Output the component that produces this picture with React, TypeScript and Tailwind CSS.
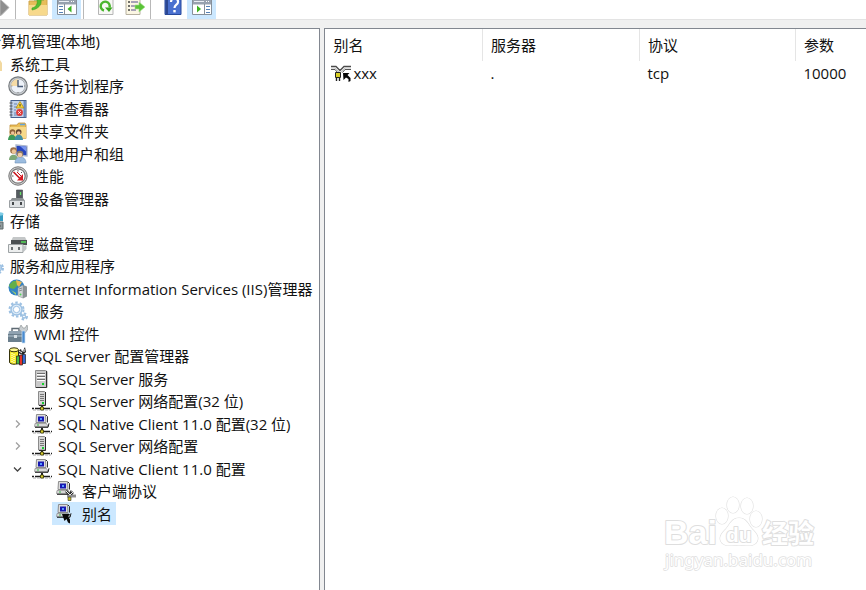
import type { ReactNode } from "react";

const svg = (children: ReactNode, width = 20) => (
  <svg width={width} height={20} viewBox={`0 0 ${width} 20`} className="shrink-0" aria-hidden="true">
    {children}
  </svg>
);

const ComputerIcon = () => svg(<rect x="1" y="3" width="17" height="13" fill="#9ab" />);

const ToolsIcon = () => svg(<path d="M2 6h14l2 3v8H2z" fill="#f2d9a0" />);

const ClockIcon = () =>
  svg(
    <>
      <circle cx="10" cy="10" r="9.2" fill="#cfd3d6" stroke="#777b7f" strokeWidth="1.2" />
      <circle cx="10" cy="10" r="7.2" fill="#eef2f8" stroke="#9aa0a6" strokeWidth=".8" />
      <path d="M10 10V3a7 7 0 0 0-7 7z" fill="#f6dba5" />
      <path d="M10 4v6.500H15" fill="none" stroke="#4a5c78" strokeWidth="1.4" />
      <path d="M10 16v1M3.300 10h1M16 10h1" stroke="#777" />
    </>
  );

const EventIcon = () =>
  svg(
    <>
      <rect x="3" y="1.500" width="15" height="17" fill="#c3d2ea" stroke="#47618f" />
      <path d="M15.500 2H17.500v16H15.500z" fill="#6d8cc0" />
      <path d="M6 5h3M6 8h3M6 11h2M6 14h2M6 16h8" stroke="#6684b4" />
      <path d="M12 2.500l4 6.500H8z" fill="#f8d437" stroke="#ad8510" strokeWidth=".7" />
      <path d="M12 5v2.500" stroke="#333" />
      <circle cx="11.500" cy="13.500" r="3.400" fill="#df3b3b" />
      <path d="M10.300 12.300l2.400 2.400m0-2.400l-2.400 2.400" stroke="#fff" />
      <path d="M1.500 4h3M1.500 7h3M1.500 10h3M1.500 13h3M1.500 16h3" stroke="#555" />
    </>
  );

const SharedIcon = () =>
  svg(
    <>
      <path d="M2 4h7l1.500-2H17l1 2v13.500H2z" fill="#e9bd57" stroke="#c0913a" strokeWidth=".8" />
      <path d="M2 6h16v11.500H2z" fill="#f6d98b" />
      <path d="M12 3.500h5" stroke="#64a5dd" strokeWidth="1.500" />
      <path d="M0 19c0-7 8-7 8 0z" fill="#3e9a56" />
      <path d="M6.500 19c0-7 8.500-7 8.500 0z" fill="#3e8fa4" />
      <circle cx="4.500" cy="11" r="2.800" fill="#8d5f38" />
      <circle cx="10.700" cy="11" r="2.800" fill="#5d4130" />
      <circle cx="4.700" cy="12" r="1.800" fill="#eec39b" />
      <circle cx="10.700" cy="12" r="1.800" fill="#eec39b" />
    </>
  );

const UsersIcon = () =>
  svg(
    <>
      <path d="M8 1l11 1v10l-11-1z" fill="#2745bd" stroke="#a9b4cc" strokeWidth="1.300" />
      <path d="M12 2l6 .5v5z" fill="#7995ee" />
      <path d="M1 16c0-7 9-7 9 0z" fill="#7ea877" />
      <path d="M7 19c0-8 11-8 11 0z" fill="#9bbcdf" stroke="#6d8fb7" strokeWidth=".6" />
      <circle cx="5.500" cy="6.500" r="3.300" fill="#9d7148" />
      <circle cx="5.900" cy="7.500" r="2.200" fill="#edc496" />
      <circle cx="12" cy="10" r="3.300" fill="#8a7a68" />
      <circle cx="12" cy="11" r="2.300" fill="#f0cba5" />
    </>
  );

const PerfIcon = () =>
  svg(
    <>
      <circle cx="10" cy="10" r="9.200" fill="#d4d4d4" stroke="#747474" />
      <circle cx="10" cy="10" r="7.200" fill="#fff" stroke="#777" strokeWidth="1.200" />
      <path d="M5.500 6l6.500 6.500" stroke="#c8131b" strokeWidth="1.600" />
      <path d="M9 14.500h6V8z" fill="#d91c23" />
      <path d="M9 6l5 5" stroke="#c8131b" />
      <path d="M4 10h1.500M10 4v1.500M14 6l-1 1" stroke="#555" />
    </>
  );

const DeviceIcon = () =>
  svg(
    <>
      <path d="M8.500 1h6v10h-6z" fill="#555b60" stroke="#3c4144" strokeWidth=".6" />
      <path d="M12.500 3v3" stroke="#67df69" strokeWidth="1.300" />
      <path d="M4 9h11l2 3H2z" fill="#8b9092" />
      <path d="M1.500 11.500h15v7h-15z" fill="#dee1e3" stroke="#9a9fa2" />
      <path d="M5 13v3M13 13v3" stroke="#34383a" strokeWidth="1.800" />
    </>
  );

const StorageIcon = () =>
  svg(
    <>
      <path d="M8 3h11v7H8z" fill="#329ac0" />
      <ellipse cx="14" cy="3" rx="5.500" ry="1.800" fill="#7fcce5" />
      <path d="M8 11h11v7H8z" fill="#909b9d" stroke="#5d686a" />
      <path d="M16 14v2" stroke="#555" />
    </>
  );

const DiskIcon = () =>
  svg(
    <>
      <path d="M5 3h12l2 4H3z" fill="#c4c7c8" />
      <path d="M3 6h16v5H3z" fill="#4b5052" />
      <path d="M13 8h5" stroke="#53db58" strokeWidth="1.500" />
      <path d="M15.500 12l3-1v4l-3 3z" fill="#c0c4c6" />
      <path d="M.5 10.500h14.500v8H.5z" fill="#eceeee" stroke="#9da2a4" />
      <path d="M4 13v3M11 13v3" stroke="#565c5e" strokeWidth="1.700" />
    </>
  );

const GearShape = ({ cx, cy, r }: { cx: number; cy: number; r: number }) => (
  <g fill="none" stroke="#9cc0e2">
    <circle cx={cx} cy={cy} r={r} strokeWidth="2" strokeDasharray="2.500 2" />
    <circle cx={cx} cy={cy} r={r - 1.5} fill="#dcebf8" strokeWidth="1.400" />
    <circle cx={cx} cy={cy} r={r / 2.2} fill="#fff" />
  </g>
);

const AppsIcon = () => svg(<GearShape cx={14} cy={12} r={5} />);

const ServicesIcon = () =>
  svg(
    <>
      <GearShape cx={8.5} cy={8.5} r={7} />
      <GearShape cx={16} cy={15.5} r={3} />
    </>
  );

const IisIcon = () =>
  svg(
    <>
      <circle cx="8.500" cy="8.500" r="8" fill="#3183c6" />
      <path d="M1 6l4-4 5 0-1 5-3 3-4-1z" fill="#63af49" />
      <path d="M8 1l6 2-3 5-2-2z" fill="#eab952" />
      <path d="M3 11l5 3 0 2z" fill="#a6d46a" />
      <path d="M10 9l5-3v13l-5-2z" fill="#d2d6d8" stroke="#8e9699" strokeWidth=".6" />
      <path d="M15 6l4 1.500v10L15 19.500z" fill="#8b9396" />
      <path d="M11 10l3-1M11 12l3-1" stroke="#858b8e" />
      <circle cx="12.500" cy="15.500" r="1" fill="#4cd653" />
    </>
  );

const WmiIcon = () =>
  svg(
    <>
      <path d="M4 7V4.500h7V7" fill="none" stroke="#5e6a73" strokeWidth="1.400" />
      <path d="M1 7h14l2 4H0z" fill="#8fa2b1" />
      <path d="M0 10h16v8H0z" fill="#6b7f8d" />
      <path d="M0 12h16" stroke="#b6c7d2" />
      <path d="M6 11h3v3H6z" fill="#d8e1e6" />
      <path d="M13 1l2 3 2 0 2-3 1 4-3 4-3-1-3-3z" fill="#c9ced1" stroke="#83898c" strokeWidth=".6" />
      <path d="M14 7h3v12h-3z" fill="#4a8bcf" stroke="#c9dff2" strokeWidth=".7" />
    </>
  );

const SqlIcon = () =>
  svg(
    <>
      <path d="M1.500 4v12c0 3 9 3 9 0V4z" fill="#f4eb2c" stroke="#35320a" />
      <ellipse cx="6" cy="3.800" rx="4.500" ry="2" fill="#fff98c" stroke="#35320a" />
      <path d="M4 7v9M6 8v9" stroke="#fff" strokeDasharray="1 1" />
      <path d="M10 5l3-2 1 3 3-5 1 5-3 3-5-2z" fill="#252525" />
      <path d="M8.500 10h3v8h-3z" fill="#42b944" stroke="#222" strokeWidth=".7" />
      <path d="M11.500 9h3v10h-3z" fill="#e33328" stroke="#222" strokeWidth=".7" />
      <path d="M14.500 8.500h3v9h-3z" fill="#3467d6" stroke="#222" strokeWidth=".7" />
      <path d="M11 5l3 2M16 3v3" stroke="#fff" />
    </>
  );

const ServerIcon = () =>
  svg(
    <>
      <path d="M3.500 1.500h10l1.500 1v16H3.500z" fill="#c9c9c9" stroke="#8e8e8e" />
      <path d="M14.500 2v16.500H4" fill="none" stroke="#333" />
      <path d="M5 4.500h8M5 7.500h8M5 10.500h8" stroke="#6f6f6f" />
      <path d="M5 5.500h8M5 8.500h8M5 11.500h8" stroke="#fff" />
      <path d="M10 14h2v2h-2z" fill="#13d32b" />
    </>
  );

const Cable = () => (
  <>
    <path d="M10 14v3" stroke="#222" strokeWidth="2" />
    <path d="M0 17.500h20" stroke="#1d1d1d" strokeWidth="1.400" strokeDasharray="2 1 5 0" />
    <path d="M1 19h18" stroke="#aaa" strokeDasharray="3 1" />
    <path d="M8.500 16h3v3h-3z" fill="#d6cc30" stroke="#3b3808" strokeWidth=".8" />
  </>
);

const NetworkIcon = () =>
  svg(
    <>
      <Cable />
      <path d="M6.500.5h6l1 1V14h-7z" fill="#d4d4d4" stroke="#8a8a8a" />
      <path d="M13.500 1v13.500H7" fill="none" stroke="#272727" />
      <path d="M8 3.500h4M8 5.500h4M8 7.500h4M8 9.500h4" stroke="#777" />
      <path d="M10 11h2v2h-2z" fill="#18c832" />
    </>
  );

const Monitor = () => (
  <>
    <path d="M4.500.5h9l.5 8H4z" fill="#dcdcdc" stroke="#8c8c8c" />
    <path d="M14 1l1.500 1.500v6" fill="none" stroke="#333" />
    <path d="M6 2.500h6v5H6z" fill="#1719b3" />
    <path d="M8 4h2v2H8z" fill="#5799ff" />
    <path d="M3 9.500h11.500l1.500 3H2.500z" fill="#d8d8d8" stroke="#888" strokeWidth=".7" />
    <path d="M3 13.300h13l1-4" fill="none" stroke="#1b1b1b" />
    <path d="M5 11h2" stroke="#35b944" />
  </>
);

const ClientIcon = () => svg(<><Cable /><Monitor /></>);

const ProtocolIcon = () =>
  svg(
    <>
      <g transform="translate(-2 0)"><Monitor /></g>
      <path d="M10 10l4 4 3-3M11 15h9" fill="none" stroke="#333" strokeWidth="2.500" />
      <path d="M10 10l4 4 3-3M11 15h9" fill="none" stroke="#eee" />
      <path d="M12 16h3v3.500h-3z" fill="#c9bd21" stroke="#333" strokeWidth=".6" />
    </>
  );

const AliasIcon = () =>
  svg(
    <>
      <g transform="translate(-2 0)"><Monitor /></g>
      <path d="M6 10h8l-2 2.500 2 3v4l-2-1-1.500-3.500-2 2z" fill="#080808" />
    </>
  );

const AliasItemIcon = () =>
  svg(
    <>
      <path d="M0 3.500h5l4 4 4-4h7" fill="none" stroke="#4b4b4b" strokeWidth="1.300" />
      <path d="M0 5h4l5 5 5-5h6" fill="none" stroke="#c4c4c4" strokeWidth="1.200" />
      <path d="M0 6.500h4l2.500 3M20 6.500h-6l-2.500 3" fill="none" stroke="#555" />
      <path d="M4.500 9.500h5v5h-5z" fill="#d8cf26" stroke="#222" />
      <path d="M5.500 15v3M8.500 15v3" stroke="#222" strokeWidth="1.400" />
      <path d="M12 10h6.500l-2 2 3 3v3l-2 1v-3l-2.500-1.500-2.500 2.500z" fill="#050505" />
    </>
  );

type Node = { level: number; label: string; icon: () => ReactNode; state?: "open" | "closed"; selected?: boolean };

const nodes: Node[] = [
  { level: 0, label: "计算机管理(本地)", icon: ComputerIcon },
  { level: 1, label: "系统工具", icon: ToolsIcon },
  { level: 2, label: "任务计划程序", icon: ClockIcon },
  { level: 2, label: "事件查看器", icon: EventIcon },
  { level: 2, label: "共享文件夹", icon: SharedIcon },
  { level: 2, label: "本地用户和组", icon: UsersIcon },
  { level: 2, label: "性能", icon: PerfIcon },
  { level: 2, label: "设备管理器", icon: DeviceIcon },
  { level: 1, label: "存储", icon: StorageIcon },
  { level: 2, label: "磁盘管理", icon: DiskIcon },
  { level: 1, label: "服务和应用程序", icon: AppsIcon },
  { level: 2, label: "Internet Information Services (IIS)管理器", icon: IisIcon },
  { level: 2, label: "服务", icon: ServicesIcon },
  { level: 2, label: "WMI 控件", icon: WmiIcon },
  { level: 2, label: "SQL Server 配置管理器", icon: SqlIcon },
  { level: 3, label: "SQL Server 服务", icon: ServerIcon },
  { level: 3, label: "SQL Server 网络配置(32 位)", icon: NetworkIcon },
  { level: 3, label: "SQL Native Client 11.0 配置(32 位)", icon: ClientIcon, state: "closed" },
  { level: 3, label: "SQL Server 网络配置", icon: NetworkIcon, state: "closed" },
  { level: 3, label: "SQL Native Client 11.0 配置", icon: ClientIcon, state: "open" },
  { level: 4, label: "客户端协议", icon: ProtocolIcon },
  { level: 4, label: "别名", icon: AliasIcon, selected: true },
];

const indent = ["pl-0", "pl-6", "pl-12", "pl-18", "pl-24"];

function TreeRow({ node }: { node: Node }) {
  const Icon = node.icon;
  return (
    <li
      role="treeitem"
      aria-level={node.level + 1}
      aria-selected={!!node.selected}
      className={`flex items-center gap-0.5 odd:h-[22px] even:h-[23px] ${indent[node.level]}`}
    >
      {node.state ? (
        <button aria-label={node.state === "open" ? "折叠" : "展开"} className="flex h-full w-4 shrink-0 items-center justify-center">
          <svg width="10" height="10" viewBox="0 0 10 10" fill="none" strokeWidth="1.300" aria-hidden="true">
            {node.state === "open" ? <path d="M1 3.500l3.500 3.500 3.500-3.500" stroke="#444" /> : <path d="M3 1.500l3.500 3.500-3.500 3.500" stroke="#a0a0a0" />}
          </svg>
        </button>
      ) : (
        <span className="w-4 shrink-0" />
      )}
      <button className={`flex h-full items-center gap-1.5 px-1 whitespace-nowrap ${node.selected ? "bg-[#cce8ff]" : ""}`}>
        <Icon />
        {node.label}
      </button>
    </li>
  );
}

const Separator = ({ className }: { className: string }) => <span className={`h-full w-px shrink-0 bg-[#b8b8b8] ${className}`} />;

function ToolButton({ label, active, children }: { label: string; active?: boolean; children: ReactNode }) {
  return (
    <button aria-label={label} className={`flex h-full w-[29px] shrink-0 items-end justify-center pb-0.5 ${active ? "bg-[#cce8ff]" : ""}`}>
      {children}
    </button>
  );
}

const PanelIcon = ({ right }: { right?: boolean }) =>
  svg(
    <>
      <path d="M.5 2.500h19v15H.5z" fill="#fff" stroke="#87909a" />
      <path d="M1 3h18v4.500H1z" fill="#97a1af" />
      <path d="M2 4.500h10" stroke="#e9edf3" />
      <path d="M14 4.500h4" stroke="#fff" strokeDasharray="1 1" />
      <path d={right ? "M12.500 7v10" : "M7.500 7v10"} stroke="#87909a" />
      <path d={right ? "M14 9.500h4M14 12.500h4M14 15.500h4" : "M2 9.500h4M2 12.500h4M2 15.500h4"} stroke="#5581b7" />
      <path d={right ? "M5 8.500v7l4-3.500z" : "M14.500 8.500v7l-4-3.500z"} fill="#3bb31f" />
    </>
  );

function Toolbar() {
  return (
    <div role="toolbar" aria-label="工具栏" className="flex h-5 shrink-0 overflow-hidden border-b border-[#e3e3e3] bg-white">
      <button aria-label="前进" className="flex w-[15px] shrink-0 items-end">
        <svg width="10" height="20" viewBox="0 0 10 20" aria-hidden="true">
          <path d="M0 1h1l8 7.500-8 8H0z" fill="#8e8e8e" stroke="#b4b4b4" />
        </svg>
      </button>
      <Separator className="mr-[7px]" />
      <ToolButton label="向上">
        {svg(
          <>
            <path d="M1 4h8l2-2h8v16H1z" fill="#e7bd59" stroke="#d0a54b" />
            <path d="M1 8h18v10H1z" fill="#f7d98c" />
            <path d="M4 11c4-1 6-4 5-8H6l5-5 5 5h-3c1 5-3 9-9 10z" fill="#54bd31" stroke="#3b9d22" strokeWidth=".6" />
          </>
        )}
      </ToolButton>
      <ToolButton label="显示控制台树" active><PanelIcon /></ToolButton>
      <Separator className="ml-0.5 mr-[7px]" />
      <ToolButton label="刷新">
        {svg(
          <>
            <path d="M2.500 0H14l3 3v14.500H2.500z" fill="#f8f8f5" stroke="#b5b5b5" />
            <path d="M8 13.500a4.500 4.500 0 1 1 5.500-3" fill="none" stroke="#4bb62f" strokeWidth="2.400" />
            <path d="M9 10.500h7.500L13 15z" fill="#37a61d" />
          </>
        )}
      </ToolButton>
      <ToolButton label="导出列表">
        {svg(
          <>
            <path d="M1 0h12l2 3v14.500H1z" fill="#fbf6e3" stroke="#b6b0a0" />
            <path d="M3 5h2M3 9h2M3 13h2" stroke="#444" strokeWidth="1.300" />
            <path d="M6 5h7M6 9h6M6 13h5" stroke="#8c86a8" strokeWidth="1.300" />
            <path d="M10 8h4V5l6 5-6 5v-3h-4z" fill="#5ac337" stroke="#a3e18a" strokeWidth=".6" />
          </>
        )}
      </ToolButton>
      <Separator className="ml-px mr-[7px]" />
      <ToolButton label="帮助">
        {svg(
          <>
            <path d="M2 0h16v17.500H2z" fill="#4a70cf" stroke="#27499c" />
            <path d="M2.500 0H5v17.500H2.500z" fill="#2b4791" />
            <path d="M8 5c0-5 7.500-4.500 7 0 0 3-3.500 2.500-3.500 6" fill="none" stroke="#fff" strokeWidth="2.200" />
            <path d="M10.300 13h2.400v2.400h-2.400z" fill="#fff" />
          </>
        )}
      </ToolButton>
      <ToolButton label="显示操作窗格" active><PanelIcon right /></ToolButton>
    </div>
  );
}

const columns = ["别名", "服务器", "协议", "参数"];

function Watermark() {
  return (
    <svg
      className="pointer-events-none absolute right-11 bottom-3"
      width="160"
      height="84"
      viewBox="0 0 160 84"
      fill="#fff"
      stroke="#dedede"
      strokeWidth="2"
      strokeLinejoin="round"
      paintOrder="stroke"
      role="img"
      aria-label="Baidu 经验"
    >
      <g fontFamily="'Liberation Sans', 'Noto Sans CJK SC', sans-serif" fontWeight="700">
        <text x="2" y="50" fontSize="34">Bai</text>
        <g strokeWidth="1.200">
          <ellipse cx="60" cy="22" rx="6" ry="8" />
          <ellipse cx="71" cy="11" rx="6" ry="8" />
          <ellipse cx="85" cy="12" rx="6" ry="8" />
          <ellipse cx="94" cy="25" rx="6" ry="8" />
          <path d="M77 24c-7 0-9 6-13 11-5 5-8 9-4 14 4 4 10 2 17 2s13 2 17-2c4-5 1-9-4-14-4-5-6-11-13-11z" />
        </g>
        <text x="64" y="48" fontSize="21">du</text>
        <text x="100" y="49" fontSize="26">经验</text>
      </g>
      <text x="3" y="72" fontSize="17" strokeWidth="1.500" fontFamily="'Noto Sans', sans-serif">jingyan.baidu.com</text>
    </svg>
  );
}

export default function App() {
  return (
    <div className="relative flex h-screen flex-col overflow-hidden bg-[#f0f0f0] font-['Open_Sans','Noto_Sans_CJK_SC',sans-serif] text-[15px] leading-5 text-[#111]">
      <Toolbar />
      <main className="flex min-h-0 flex-1 gap-1 pt-2">
        <nav aria-label="控制台树" className="w-[37%] shrink-0 overflow-hidden border-t border-r border-[#828790] bg-white">
          <ul role="tree" className="-ml-[62px] pt-px">
            {nodes.map((node, i) => <TreeRow key={i} node={node} />)}
          </ul>
        </nav>
        <section aria-label="别名列表" className="min-w-0 flex-1 overflow-hidden border-t border-l border-[#828790] bg-white">
          <table className="w-full table-fixed text-left">
            <colgroup>
              <col className="w-[157px]" />
              <col className="w-[157px]" />
              <col className="w-[156px]" />
              <col />
            </colgroup>
            <thead>
              <tr className="h-8">
                {columns.map((name) => (
                  <th key={name} scope="col" className="border-r border-[#e5e5e5] pl-2 font-normal last:border-r-0">{name}</th>
                ))}
              </tr>
            </thead>
            <tbody>
              <tr className="h-6">
                <td className="pl-1.5">
                  <span className="flex items-center gap-0.5"><AliasItemIcon />xxx</span>
                </td>
                <td className="pl-2">.</td>
                <td className="pl-2">tcp</td>
                <td className="pl-2">10000</td>
              </tr>
            </tbody>
          </table>
        </section>
      </main>
      <Watermark />
    </div>
  );
}
